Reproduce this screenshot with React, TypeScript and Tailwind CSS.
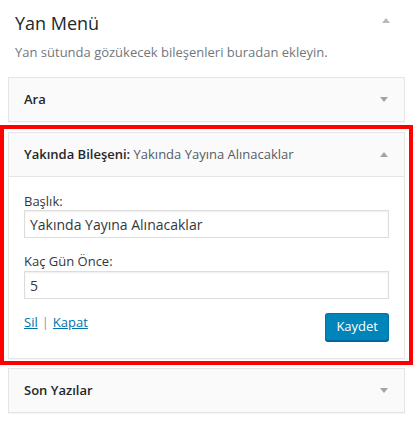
import type { ReactNode } from 'react'

function Caret({ up = false, color = '#a0a5aa' }: { up?: boolean; color?: string }) {
  return (
    <svg width="8" height="5" viewBox="0 0 8 5" className="shrink-0">
      <path d={up ? 'M0 5 L4 0 L8 5 Z' : 'M0 0 L8 0 L4 5 Z'} fill={color} />
    </svg>
  )
}

function ClosedWidget({ title }: { title: string }) {
  return (
    <div className="flex h-[45px] items-center justify-between border border-[#e5e5e5] bg-[#fafafa] pl-[15px] pr-4 shadow-[0_1px_1px_rgba(0,0,0,0.04)]">
      <span className="text-[13px] font-semibold text-[#23282d]">{title}</span>
      <Caret />
    </div>
  )
}

function Field({ label, value, className = '' }: { label: string; value: string; className?: string }) {
  return (
    <label className={`block ${className}`}>
      <span className="block text-[13px] leading-[18px] text-[#32373c]">{label}</span>
      <input
        type="text"
        defaultValue={value}
        className="mt-0 block h-[28px] w-full border border-[#dddddd] bg-white px-[5px] text-[14px] text-[#32373c] shadow-[inset_0_1px_2px_rgba(0,0,0,0.07)] outline-none"
      />
    </label>
  )
}

function Sep({ children }: { children: ReactNode }) {
  return <span className="mx-[4px] text-[#9d8fb3]">{children}</span>
}

export default function App() {
  return (
    <div className="min-h-screen bg-white px-2 font-['Open_Sans',sans-serif]">
      <div className="flex items-start justify-between pl-[7px] pr-[15px] pt-[9px]">
        <h2 className="text-[18px] leading-[28px] font-normal text-[#23282d]">Yan Menü</h2>
        <div className="mt-[9px]">
          <Caret up color="#b4b9be" />
        </div>
      </div>
      <p className="mt-[5px] pl-[7px] text-[13px] leading-[20px] text-[#72777c]">
        Yan sütunda gözükecek bileşenleri buradan ekleyin.
      </p>

      <div className="mt-[15px]">
        <ClosedWidget title="Ara" />
      </div>

      <div className="-mx-2 mt-[3px] border-4 border-[#ff0000] px-1 pt-[3px] pb-[2px]">
        <div className="border border-[#e5e5e5] bg-white shadow-[0_1px_1px_rgba(0,0,0,0.04)]">
          <div className="flex h-[44px] items-center justify-between border-b border-[#e5e5e5] bg-[#fafafa] pl-[15px] pr-4">
            <span className="text-[13px] text-[#23282d]">
              <span className="font-semibold">Yakında Bileşeni:</span>
              <span className="text-[#555d66]"> Yakında Yayına Alınacaklar</span>
            </span>
            <Caret up />
          </div>
          <div className="px-[15px] pt-[15px] pb-[17px]">
            <Field label="Başlık:" value="Yakında Yayına Alınacaklar" />
            <Field label="Kaç Gün Önce:" value="5" className="mt-[14px] [&>input]:mt-[1px]" />
            <div className="mt-[14px] flex items-start justify-between">
              <div className="text-[13px] leading-[18px]">
                <a href="#" className="text-[#0073aa] underline">Sil</a>
                <Sep>|</Sep>
                <a href="#" className="text-[#0073aa] underline">Kapat</a>
              </div>
              <button
                type="button"
                className="h-[28px] rounded-[3px] border border-[#0073aa] border-b-[#006799] bg-[#0085ba] px-[10px] text-[13px] text-white shadow-[0_1px_0_#006799]"
              >
                Kaydet
              </button>
            </div>
          </div>
        </div>
      </div>

      <div className="mt-[3px]">
        <ClosedWidget title="Son Yazılar" />
      </div>
    </div>
  )
}
